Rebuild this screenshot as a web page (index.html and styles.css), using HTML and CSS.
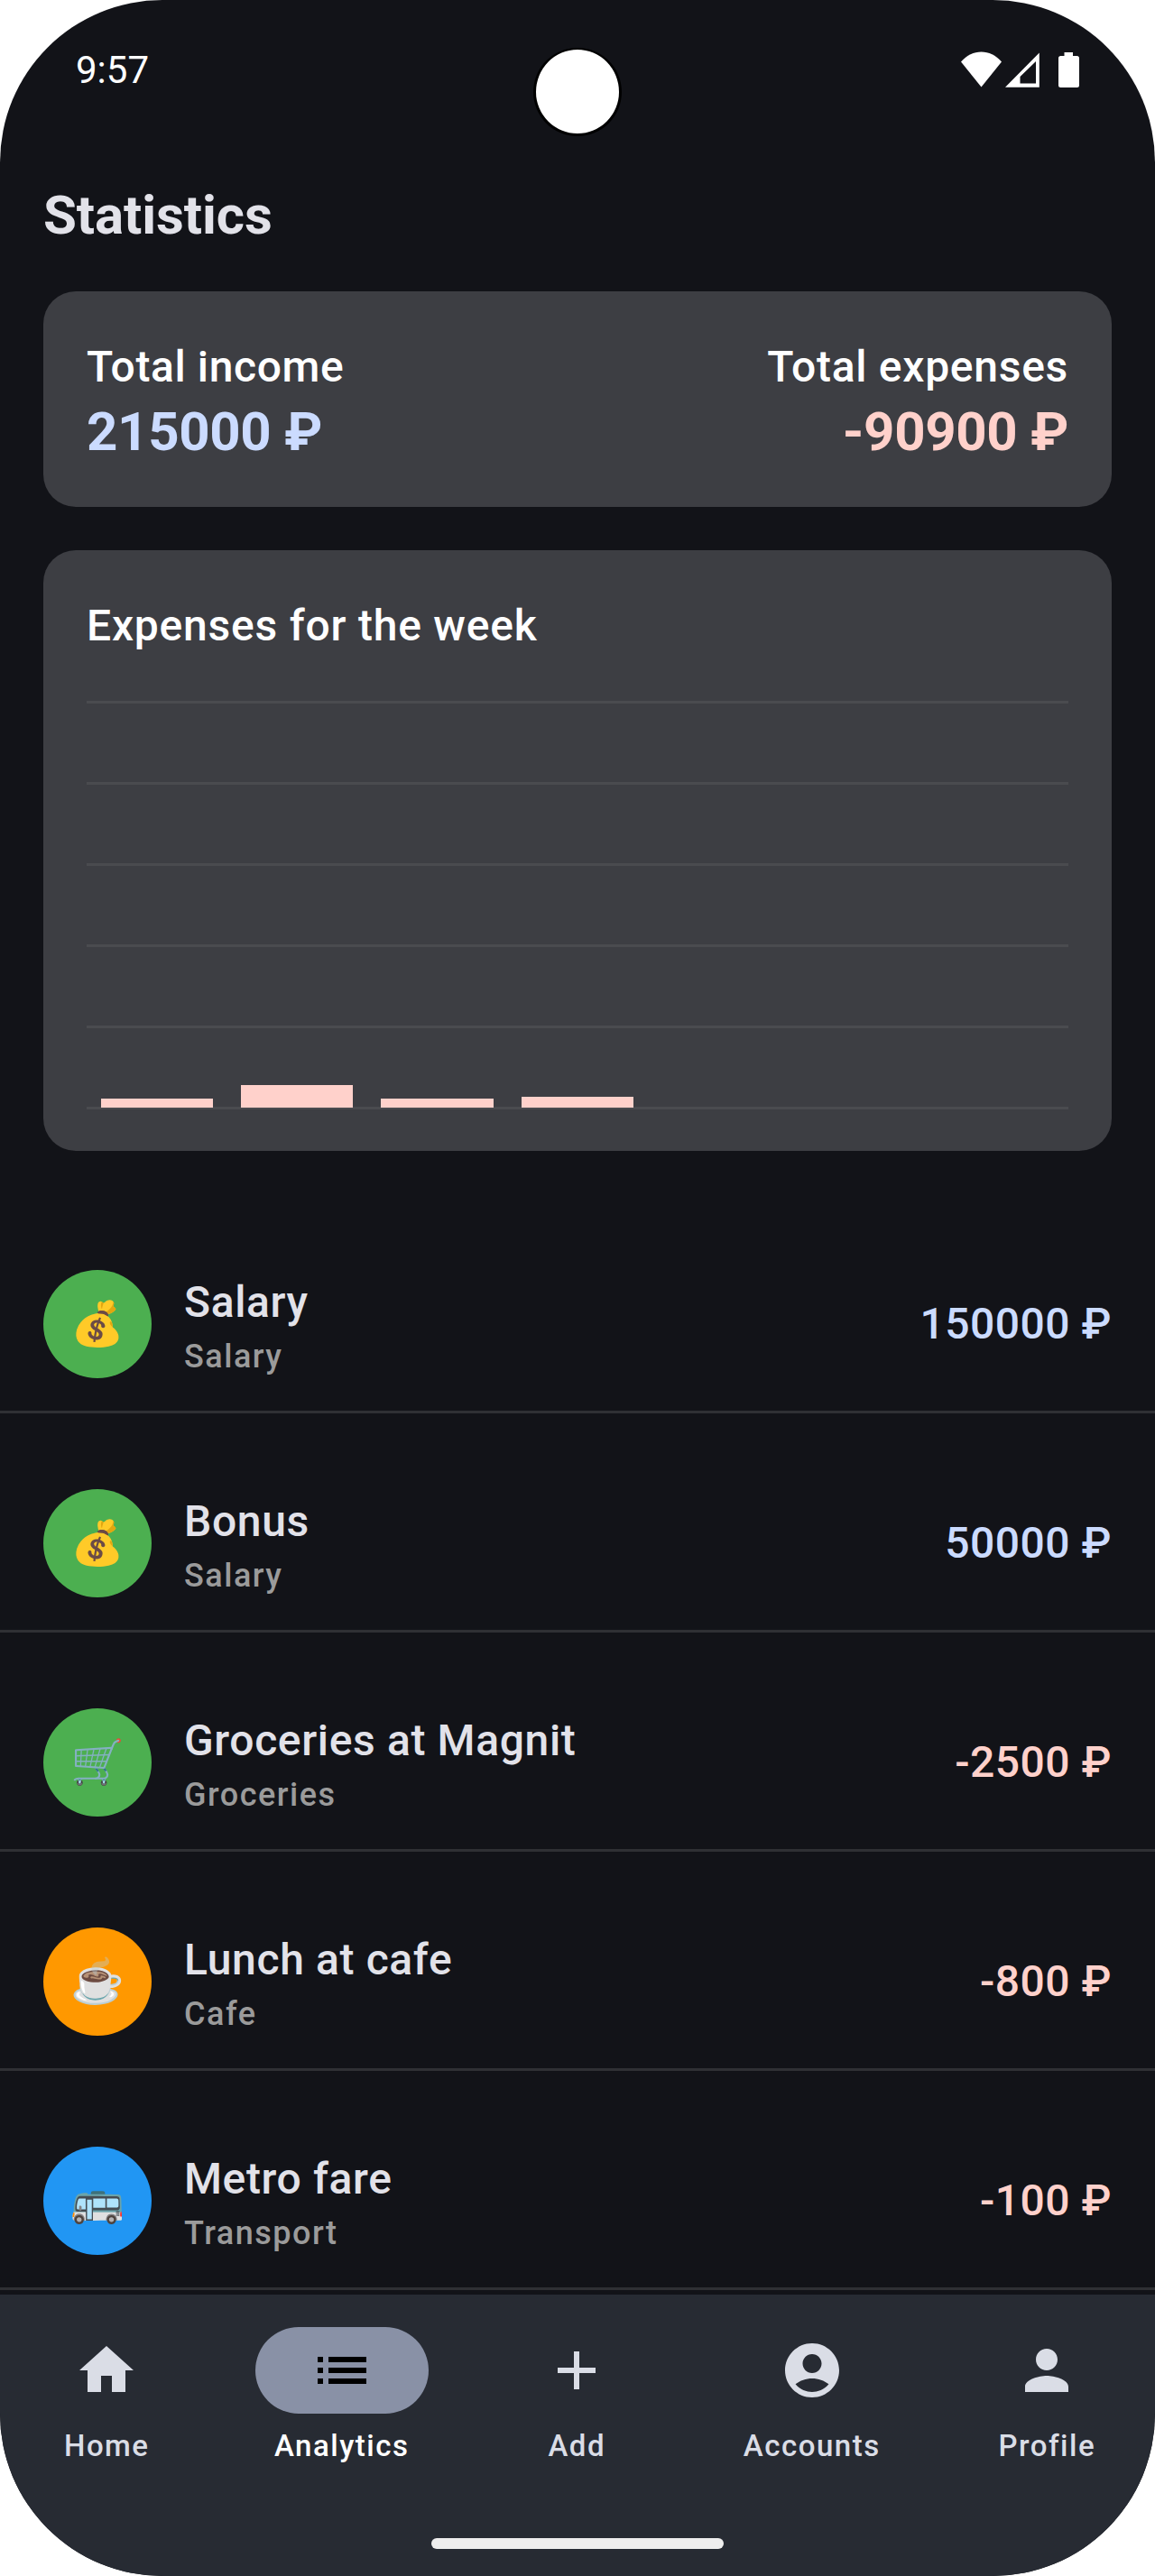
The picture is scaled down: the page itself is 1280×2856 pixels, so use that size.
FILE: index.html
```html
<!DOCTYPE html>
<html lang="en">
<head>
<meta charset="utf-8">
<title>Statistics</title>
<link rel="stylesheet" href="styles.css">
</head>
<body>
<div class="screen">
  <header class="status">
    <span class="clock">9:57</span>
    <svg class="status-icons" viewBox="0 0 140 50" aria-hidden="true">
      <path d="M0 11.500C12.500 -3.200 32.500 -3.200 45 11.500L22.500 39.500Z"/>
      <path fill-rule="evenodd" d="M49 39.700L86.800 1.500V39.700ZM65.500 35.500H83V11L65.500 28Z"/>
      <path d="M114.500 1H124V5H128.500Q131 5 131 7.500V37.500Q131 40 128.500 40H110.500Q108 40 108 37.500V7.500Q108 5 110.500 5H114.500Z"/>
    </svg>
    <span class="camera"></span>
  </header>

  <main class="content">
    <h1 class="heading">Statistics</h1>

    <section class="card totals">
      <div>
        <div class="label">Total income</div>
        <div class="sum income">215000 ₽</div>
      </div>
      <div class="right">
        <div class="label">Total expenses</div>
        <div class="sum expense">-90900 ₽</div>
      </div>
    </section>

    <section class="card week">
      <div class="label">Expenses for the week</div>
      <div class="chart">
        <div class="grid"><i></i><i></i><i></i><i></i><i></i><i></i></div>
        <div class="bars">
          <b style="height:10.500px"></b><b style="height:25.500px"></b><b style="height:10.500px"></b><b style="height:12px"></b><b></b><b></b><b></b>
        </div>
      </div>
    </section>

    <ul class="list">
      <li class="row">
        <span class="avatar green">💰</span>
        <div class="texts"><div class="name">Salary</div><div class="category">Salary</div></div>
        <div class="amount income">150000 ₽</div>
      </li>
      <li class="row">
        <span class="avatar green">💰</span>
        <div class="texts"><div class="name">Bonus</div><div class="category">Salary</div></div>
        <div class="amount income">50000 ₽</div>
      </li>
      <li class="row">
        <span class="avatar green">🛒</span>
        <div class="texts"><div class="name">Groceries at Magnit</div><div class="category">Groceries</div></div>
        <div class="amount expense">-2500 ₽</div>
      </li>
      <li class="row">
        <span class="avatar orange">☕</span>
        <div class="texts"><div class="name">Lunch at cafe</div><div class="category">Cafe</div></div>
        <div class="amount expense">-800 ₽</div>
      </li>
      <li class="row">
        <span class="avatar blue">🚌</span>
        <div class="texts"><div class="name">Metro fare</div><div class="category">Transport</div></div>
        <div class="amount expense">-100 ₽</div>
      </li>
    </ul>
  </main>

  <nav class="nav">
    <div class="tabs">
      <a class="tab"><span class="pill"><svg viewBox="0 0 24 24"><path d="M10 20v-6h4v6h5v-8h3L12 3 2 12h3v8z"/></svg></span>Home</a>
      <a class="tab active"><span class="pill"><svg viewBox="0 0 24 24"><path d="M3 13h2v-2H3v2zm0 4h2v-2H3v2zm0-8h2V7H3v2zm4 4h14v-2H7v2zm0 4h14v-2H7v2zM7 7v2h14V7H7z"/></svg></span>Analytics</a>
      <a class="tab"><span class="pill"><svg viewBox="0 0 24 24"><path d="M19 13h-6v6h-2v-6H5v-2h6V5h2v6h6v2z"/></svg></span>Add</a>
      <a class="tab"><span class="pill"><svg viewBox="0 0 24 24"><path d="M12 2C6.480 2 2 6.480 2 12s4.480 10 10 10 10-4.480 10-10S17.520 2 12 2zm0 4c1.930 0 3.500 1.570 3.500 3.500S13.930 13 12 13s-3.500-1.570-3.500-3.500S10.070 6 12 6zm0 14c-2.030 0-4.430-.820-6.140-2.880C7.550 15.800 9.680 15 12 15s4.450.800 6.140 2.120C16.430 19.180 14.030 20 12 20z"/></svg></span>Accounts</a>
      <a class="tab"><span class="pill"><svg viewBox="0 0 24 24"><path d="M12 12c2.210 0 4-1.790 4-4s-1.790-4-4-4-4 1.790-4 4 1.790 4 4 4zm0 2c-2.670 0-8 1.340-8 4v2h16v-2c0-2.660-5.330-4-8-4z"/></svg></span>Profile</a>
    </div>
    <div class="handle"></div>
  </nav>
</div>
</body>
</html>
```
FILE: styles.css
```css
* { box-sizing: border-box; }

body {
  margin: 0;
  background: #fff;
  font-family: Roboto, "Noto Sans", sans-serif;
}

.screen {
  width: 1280px;
  height: 2856px;
  display: flex;
  flex-direction: column;
  overflow: hidden;
  border-radius: 180px;
  background: #121318;
  color: #e2e2e9;
}

.status {
  position: relative;
  flex: none;
  height: 156px;
  padding: 0 75px 0 84px;
  display: flex;
  justify-content: space-between;
  align-items: flex-start;
  color: #fff;
}

.clock { margin-top: 53px; font-size: 42px; line-height: 49px; }

.status-icons { width: 140px; height: 50px; margin-top: 57px; fill: #fff; }

.camera {
  position: absolute;
  left: 591px;
  top: 53px;
  width: 98px;
  height: 98px;
  border: 3px solid #000;
  border-top-width: 2px;
  border-radius: 50%;
  background: #fff;
}

.content { flex: 1; min-height: 0; overflow: hidden; }

.heading {
  margin: 48px 48px 49px;
  font-size: 60px;
  line-height: 70px;
  font-weight: 700;
  letter-spacing: -0.100px;
}

.card {
  margin: 0 48px 48px;
  padding: 48px;
  border-radius: 36px;
  background: #3d3e43;
}

.totals { display: flex; justify-content: space-between; height: 239px; }

.right { text-align: right; }

.label {
  font-size: 48px;
  line-height: 72px;
  font-weight: 500;
  letter-spacing: 0.600px;
  color: #fff;
}
.right .label { letter-spacing: 0.720px; }
.week .label { letter-spacing: 0.780px; }

.sum { font-size: 60px; line-height: 71px; font-weight: 700; letter-spacing: -0.350px; }

.income { color: #cbdbff; }
.expense { color: #ffd1cb; }

.week { height: 666px; }

.chart { display: grid; height: 453px; margin-top: 46.500px; }
.chart > div { grid-area: 1 / 1; }

.grid { display: flex; flex-direction: column; justify-content: space-between; }
.grid i { height: 3px; background: #4a4b4f; }

.bars { display: flex; align-items: flex-end; padding-bottom: 1.500px; }
.bars b { flex: 1; margin: 0 15.540px; background: #ffd1cb; }

.list { list-style: none; margin: 0; padding: 0; }

.row {
  height: 243px;
  padding: 84px 48px 36px;
  display: flex;
  align-items: center;
  border-bottom: 3px solid #2f3034;
}

.avatar {
  width: 120px;
  height: 120px;
  margin-right: 36px;
  padding-bottom: 1px;
  display: flex;
  align-items: center;
  justify-content: center;
  border-radius: 50%;
  font-size: 48px;
  font-family: Roboto, "Noto Color Emoji", sans-serif;
}
.green { background: #4caf50; }
.orange { background: #ff9800; }
.blue { background: #2196f3; }

.texts { flex: 1; }
.name { font-size: 48px; line-height: 72px; font-weight: 500; letter-spacing: 0.630px; }
.category { font-size: 36px; line-height: 48px; font-weight: 500; letter-spacing: 1.500px; color: #9b9b9b; }
.amount { font-size: 48px; line-height: 72px; font-weight: 500; letter-spacing: 0.500px; }

.nav {
  flex: none;
  height: 312px;
  padding-top: 36px;
  display: flex;
  flex-direction: column;
  align-items: center;
  background: #272b33;
}

.tabs { align-self: stretch; display: flex; gap: 24px; padding-right: 1.500px; }

.tab {
  flex: 1;
  display: flex;
  flex-direction: column;
  align-items: center;
  gap: 12px;
  font-size: 33px;
  line-height: 48px;
  font-weight: 500;
  letter-spacing: 1.500px;
  color: #dadde6;
}
.tab svg { width: 72px; height: 72px; fill: #dadde6; }
.pill { width: 192px; height: 96px; border-radius: 48px; display: flex; align-items: center; justify-content: center; }
.active { color: #fff; }
.active .pill { background: #8991a6; }
.active svg { fill: #000; }

.handle { width: 324px; height: 12px; margin-top: 78px; border-radius: 6px; background: #eee; }
```
